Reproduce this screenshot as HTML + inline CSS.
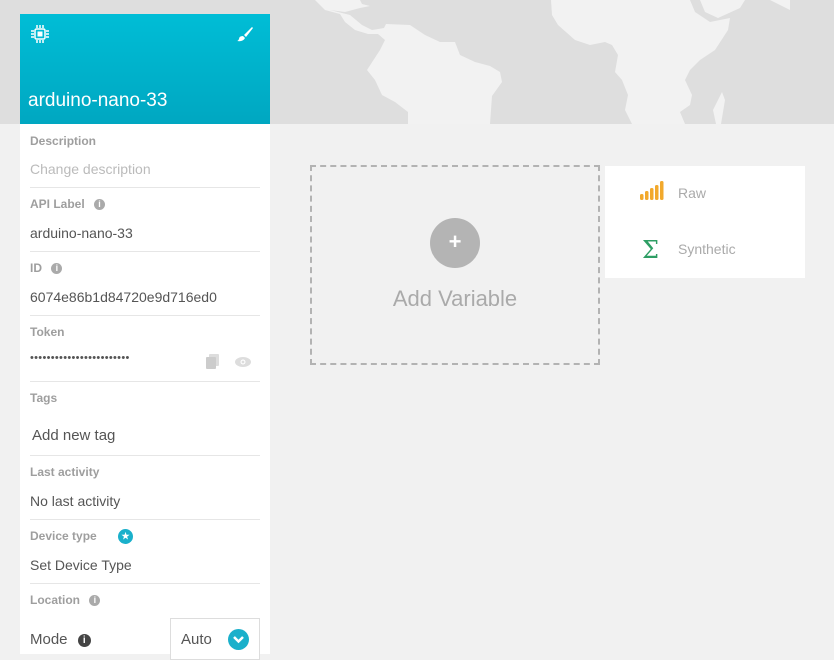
<!DOCTYPE html>
<html><head><style>
body{margin:0;width:834px;height:651px;background:#f1f1f1;font-family:"Liberation Sans",sans-serif;position:relative;overflow:hidden}
.map{position:absolute;left:0;top:0}
.card{position:absolute;left:20px;top:14px;width:250px;height:640px;background:#fff}
.hdr{height:110px;background:linear-gradient(#00bdd6,#00a7c1);position:relative}
.hdr .t{position:absolute;left:8px;top:76px;color:#fff;font-size:19px}
.row{position:absolute;left:10px;width:230px}
.lab{font-size:12px;font-weight:bold;color:#9e9e9e}
.val{font-size:14px;color:#555}
.hr{position:absolute;left:10px;width:230px;height:1px;background:#e6e6e6}
.i{display:inline-block;width:11px;height:11px;border-radius:50%;background:#aaa;color:#fff;font-size:9px;text-align:center;line-height:11px;font-weight:bold;vertical-align:1px;margin-left:6px}
.add{position:absolute;left:310px;top:165px;width:286px;height:196px;border:2px dashed #b3b3b3}
.plus{position:absolute;left:118px;top:51px;width:50px;height:50px;border-radius:50%;background:#b4b4b4;color:#fff;font-size:22px;text-align:center;line-height:48px;font-weight:bold}
.at{position:absolute;left:0;width:100%;top:119px;text-align:center;font-size:22px;color:#aaa}
.menu{position:absolute;left:605px;top:166px;width:200px;height:112px;background:#fff}
</style></head><body>
<svg class="map" width="834" height="124"><rect width="834" height="124" fill="#dedede"/>
<path fill="#f2f2f2" d="M315,0 L360,0 L362,4 L370,6 L360,8 L345,12 L330,10 L350,15 L362,25 L372,30 L384,28 L386,24 L410,25 L425,35 L440,42 L455,42 L460,55 L475,62 L490,66 L500,72 L502,82 L492,96 L490,124 L408,124 L408,112 L395,102 L382,95 L375,80 L367,70 L380,50 L385,40 L378,34 L368,34 L355,30 L345,22 L340,14 L325,10Z"/>
<path fill="#f2f2f2" d="M551,0 L690,0 L695,12 L710,22 L730,18 L728,30 L715,50 L700,60 L690,70 L685,80 L692,95 L690,105 L680,112 L685,124 L632,124 L625,110 L628,95 L622,80 L615,72 L618,55 L612,45 L605,42 L590,45 L575,40 L558,25 L552,15Z"/>
<path fill="#f2f2f2" d="M700,0 L745,0 L740,8 L718,18 L705,12Z"/>
<path fill="#f2f2f2" d="M722,92 L725,100 L721,124 L716,124 L713,110Z"/>
<path fill="#f2f2f2" d="M340,0 L345,3 L338,4Z M770,0 L790,0 L790,10Z"/>
</svg>
<div class="card">
 <div class="hdr">
  <svg style="position:absolute;left:10px;top:10px" width="20" height="20" viewBox="0 0 20 20" fill="none" stroke="#fff" stroke-width="1.5"><rect x="5" y="5" width="10" height="10" rx="1.5"/><rect x="7.5" y="7.5" width="5" height="5" fill="#fff" stroke="none"/><path d="M7 1v3M10 1v3M13 1v3M7 16v3M10 16v3M13 16v3M1 7h3M1 10h3M1 13h3M16 7h3M16 10h3M16 13h3"/></svg>
  <svg style="position:absolute;left:216px;top:12px" width="18" height="16" viewBox="0 0 18 16"><path d="M16 1 L8 9 L10 11 L17 2Z" fill="#fff"/><path d="M7 10 Q3 10 3 13 Q2 15 1 15 Q7 16 9 12Z" fill="#fff"/></svg>
  <div class="t">arduino-nano-33</div>
 </div>
 <div class="row lab" style="top:120px">Description</div>
 <div class="row val" style="top:147px;color:#bbb">Change description</div>
 <div class="hr" style="top:173px"></div>
 <div class="row lab" style="top:183px">API Label <span class="i">i</span></div>
 <div class="row val" style="top:211px">arduino-nano-33</div>
 <div class="hr" style="top:237px"></div>
 <div class="row lab" style="top:247px">ID <span class="i">i</span></div>
 <div class="row val" style="top:275px">6074e86b1d84720e9d716ed0</div>
 <div class="hr" style="top:301px"></div>
 <div class="row lab" style="top:311px">Token</div>
 <div class="row val" style="top:338px;font-size:11px;letter-spacing:0.3px">••••••••••••••••••••••••</div>
 <svg style="position:absolute;left:186px;top:340px" width="14" height="15"><rect x="3" y="0" width="10" height="12" rx="1" fill="#ddd"/><rect x="0" y="3" width="10" height="12" rx="1" fill="#ccc"/></svg>
 <svg style="position:absolute;left:214px;top:342px" width="18" height="12"><ellipse cx="9" cy="6" rx="8" ry="5" fill="#ddd"/><circle cx="9" cy="6" r="2.5" fill="#fff"/><circle cx="9" cy="6" r="1.4" fill="#ddd"/></svg>
 <div class="hr" style="top:367px"></div>
 <div class="row lab" style="top:377px">Tags</div>
 <div class="row val" style="top:413px;left:12px;font-size:15px">Add new tag</div>
 <div class="hr" style="top:441px"></div>
 <div class="row lab" style="top:451px">Last activity</div>
 <div class="row val" style="top:479px">No last activity</div>
 <div class="hr" style="top:505px"></div>
 <div class="row lab" style="top:515px">Device type <span style="display:inline-block;width:15px;height:15px;border-radius:50%;background:#1ab0cb;color:#fff;font-size:9px;text-align:center;line-height:15px;margin-left:18px;vertical-align:1px">★</span></div>
 <div class="row val" style="top:543px">Set Device Type</div>
 <div class="hr" style="top:569px"></div>
 <div class="row lab" style="top:579px">Location <span class="i">i</span></div>
 <div class="row val" style="top:617px;font-size:15px">Mode <span class="i" style="background:#444;width:13px;height:13px;line-height:13px;font-size:10px">i</span></div>
 <div style="position:absolute;left:150px;top:604px;width:88px;height:40px;border:1px solid #ddd;background:#fff"><span style="position:absolute;left:10px;top:12px;font-size:15px;color:#555">Auto</span><span style="position:absolute;left:57px;top:10px;width:21px;height:21px;border-radius:50%;background:#1ab0cb"><svg width="21" height="21"><path d="M6 8 L10.5 12.5 L15 8" stroke="#fff" stroke-width="2.5" fill="none"/></svg></span></div>
</div>
<div class="add"><div class="plus">+</div><div class="at">Add Variable</div></div>
<div class="menu">
 <svg style="position:absolute;left:34px;top:14px" width="26" height="22"><rect x="1" y="14" width="3.5" height="6" rx="1.5" fill="#f2a92c"/><rect x="6" y="11" width="3.5" height="9" rx="1.5" fill="#f2a92c"/><rect x="11" y="8" width="3.5" height="12" rx="1.5" fill="#f2a92c"/><rect x="16" y="5" width="3.5" height="15" rx="1.5" fill="#f2a92c"/><rect x="21" y="1" width="3.5" height="19" rx="1.5" fill="#f2a92c"/></svg>
 <div style="position:absolute;left:73px;top:19px;font-size:14px;color:#aaa">Raw</div>
 <div style="position:absolute;left:37px;top:70px;font-size:24px;color:#2e9e64;font-family:'DejaVu Serif',serif">Σ</div>
 <div style="position:absolute;left:73px;top:75px;font-size:14px;color:#aaa">Synthetic</div>
</div>
</body></html>
